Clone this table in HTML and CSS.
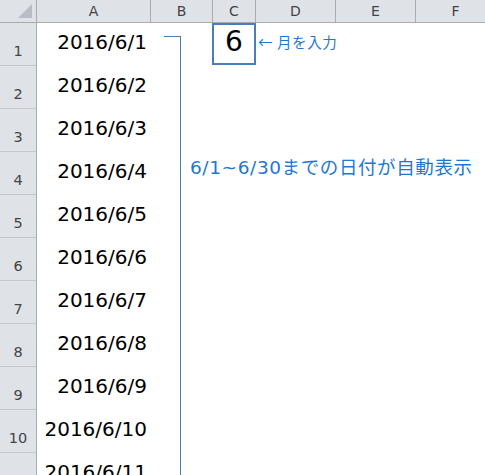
FILE: index.html
```html
<!DOCTYPE html>
<html lang="ja">
<head>
    <meta charset="UTF-8">
    <meta name="viewport" content="width=device-width, initial-scale=1.0">
    <title>日付の自動表示</title>
    <link rel="stylesheet" href="styles.css">
</head>
<body>
    <div class="sheet">
        <!-- column headers -->
        <div class="row head-row">
            <div class="corner">
                <svg width="36" height="22" viewBox="0 0 36 22"><polygon points="32,4 32,18 18,18" fill="#b9bdc3"/></svg>
            </div>
            <div>A</div>
            <div>B</div>
            <div>C</div>
            <div>D</div>
            <div>E</div>
            <div>F</div>
        </div>

        <div class="row">
            <div class="row-head">1</div>
            <div class="cell date">2016/6/1</div>
            <div class="cell"></div>
            <div class="cell month">6</div>
            <div class="cell note">← 月を入力</div>
        </div>
        <div class="row">
            <div class="row-head">2</div>
            <div class="cell date">2016/6/2</div>
        </div>
        <div class="row">
            <div class="row-head">3</div>
            <div class="cell date">2016/6/3</div>
        </div>
        <div class="row">
            <div class="row-head">4</div>
            <div class="cell date">2016/6/4</div>
        </div>
        <div class="row">
            <div class="row-head">5</div>
            <div class="cell date">2016/6/5</div>
        </div>
        <div class="row">
            <div class="row-head">6</div>
            <div class="cell date">2016/6/6</div>
        </div>
        <div class="row">
            <div class="row-head">7</div>
            <div class="cell date">2016/6/7</div>
        </div>
        <div class="row">
            <div class="row-head">8</div>
            <div class="cell date">2016/6/8</div>
        </div>
        <div class="row">
            <div class="row-head">9</div>
            <div class="cell date">2016/6/9</div>
        </div>
        <div class="row">
            <div class="row-head">10</div>
            <div class="cell date">2016/6/10</div>
        </div>
        <div class="row">
            <div class="row-head">11</div>
            <div class="cell date">2016/6/11</div>
        </div>

        <!-- shapes drawn over the sheet -->
        <div class="bracket"></div>
        <div class="bracket-label">6/1~6/30までの日付が自動表示</div>
    </div>
</body>
</html>
```

FILE: styles.css
```css
:root {
    --head-bg: #dfe3e8;
    --head-line: #ababab;
    --row-line: #c3c6ca;
    --head-text: #444;
    --shape-blue: #4a7ebb;
    --text-blue: #1f77d0;
}

* {
    box-sizing: border-box;
}

body {
    margin: 0;
    background: #fff;
    overflow: hidden;
    font-family: "DejaVu Sans", "Noto Sans CJK JP", sans-serif;
    color: #000;
}

.sheet {
    position: relative;
    width: 485px;
    height: 475px;
    overflow: hidden;
}

.row {
    display: grid;
    grid-template-columns: 37px 114px 62px 43px 80px 80px 80px;
    height: 43px;
    width: 496px;
}

.head-row {
    height: 23px;
}

.head-row > div {
    background: var(--head-bg);
    border-right: 1px solid var(--head-line);
    border-bottom: 1px solid var(--head-line);
    color: var(--head-text);
    font-size: 14px;
    line-height: 22px;
    text-align: center;
}

.corner svg {
    display: block;
}

.row-head {
    background: var(--head-bg);
    border-right: 1px solid var(--head-line);
    border-bottom: 1px solid var(--row-line);
    color: var(--head-text);
    font-size: 14.5px;
    line-height: 20px;
    display: flex;
    align-items: flex-end;
    justify-content: center;
    padding-bottom: 4px;
}

.cell {
    white-space: nowrap;
}

.date {
    font-size: 20px;
    line-height: 36px;
    padding-top: 1px;
    padding-right: 4px;
    text-align: right;
}

.month {
    margin-left: -1px;
    margin-bottom: 1px;
    box-shadow: inset 0 0 0 2px var(--shape-blue);
    font-size: 28px;
    line-height: 36px;
    padding-top: 1px;
    text-align: center;
}

.note {
    font-family: "Noto Sans CJK JP", sans-serif;
    font-size: 14.5px;
    letter-spacing: 0.6px;
    line-height: 20px;
    padding-top: 9px;
    padding-left: 2px;
    color: var(--text-blue);
    overflow: visible;
}

.bracket {
    position: absolute;
    left: 164px;
    top: 36px;
    width: 17px;
    height: 460px;
    border-top: 1px solid var(--shape-blue);
    border-right: 1px solid var(--shape-blue);
}

.bracket-label {
    position: absolute;
    left: 190px;
    top: 156px;
    font-size: 18.5px;
    letter-spacing: 0.6px;
    line-height: 24px;
    color: var(--text-blue);
    white-space: nowrap;
}
```
